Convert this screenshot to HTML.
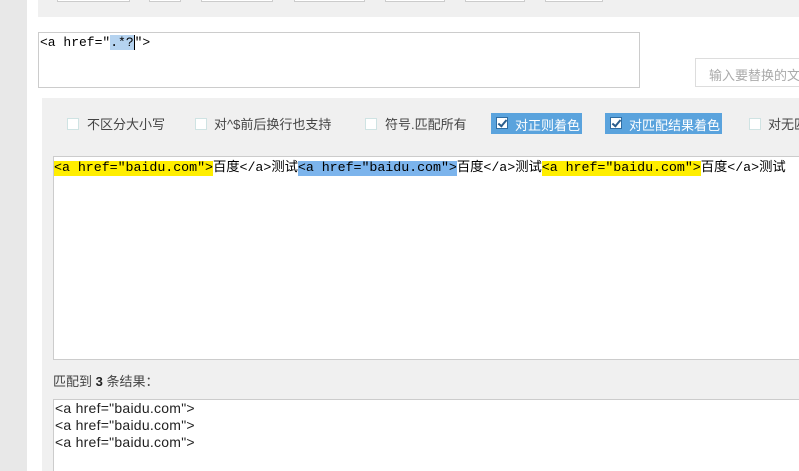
<!DOCTYPE html>
<html><head><meta charset="utf-8"><style>
*{margin:0;padding:0;box-sizing:border-box}
html,body{width:799px;height:471px;overflow:hidden}
body{background:#fff;position:relative;font-family:"Liberation Sans","Noto Sans CJK SC",sans-serif;font-size:13px;color:#333}
.abs{position:absolute}
.btn{position:absolute;top:-2px;height:4px;border:1px solid #ccc;background:#fff}
.mono{font-family:"Liberation Mono","Noto Sans CJK SC",monospace;font-size:13.33px;color:#000}
.cb{position:absolute;top:118px;width:12px;height:12px;border:1px solid #cfe3e3;background:#fff}
.lbl{position:absolute;top:114px;font-size:13px;color:#444;white-space:nowrap}
.chk{position:absolute;top:113px;height:21px;background:#5aa3dd;color:#fff;font-size:13px;padding:2px 0 0 24px;white-space:nowrap}
.chk i{position:absolute;left:5px;top:4px;width:12px;height:12px;background:#fff;border:1px solid #2f6da3}
.chk i:after{content:"";position:absolute;left:3px;top:0px;width:3px;height:7px;border:solid #2a5d8c;border-width:0 2px 2px 0;transform:rotate(40deg)}
.y{background:#ffee00}.b{background:#7cb4ec}
</style></head><body>
<div class="abs" style="left:0;top:0;width:27px;height:471px;background:#e8e8e8"></div>
<div class="abs" style="left:38px;top:0;width:761px;height:17px;background:#f0f0f0"></div>
<div class="btn" style="left:57px;width:73px"></div>
<div class="btn" style="left:149px;width:32px"></div>
<div class="btn" style="left:201px;width:72px"></div>
<div class="btn" style="left:294px;width:71px"></div>
<div class="btn" style="left:385px;width:60px"></div>
<div class="btn" style="left:465px;width:60px"></div>
<div class="btn" style="left:545px;width:58px"></div>
<div class="abs mono" style="left:38px;top:32px;width:602px;height:56px;border:1px solid #ccc;padding:2px 0 0 1px;font-size:13px;line-height:15px">&lt;a href="<span style="background:#b5d3f0">.*?</span><span style="border-left:1px solid #000"></span>"&gt;</div>
<div class="abs" style="left:695px;top:58px;width:110px;height:29px;border:1px solid #ddd;color:#aaa;padding:6px 0 0 13px;font-size:13px;white-space:nowrap">输入要替换的文</div>
<div class="abs" style="left:42px;top:98px;width:757px;height:373px;background:#f0f0f0"></div>
<div class="cb" style="left:67px"></div><div class="lbl" style="left:87px">不区分大小写</div>
<div class="cb" style="left:195px"></div><div class="lbl" style="left:214px">对^$前后换行也支持</div>
<div class="cb" style="left:365px"></div><div class="lbl" style="left:385px">符号.匹配所有</div>
<div class="chk" style="left:491px;width:91px"><i></i>对正则着色</div>
<div class="chk" style="left:605px;width:117px"><i></i>对匹配结果着色</div>
<div class="cb" style="left:749px"></div><div class="lbl" style="left:768px">对无匹</div>
<div class="abs mono" style="left:53px;top:156px;width:760px;height:204px;background:#fff;border:1px solid #ccc;padding:3px 0 0 0;line-height:17px;white-space:nowrap;letter-spacing:-0.05px"><span class="y">&lt;a href="baidu.com"&gt;</span>百度&lt;/a&gt;测试<span class="b">&lt;a href="baidu.com"&gt;</span>百度&lt;/a&gt;测试<span class="y">&lt;a href="baidu.com"&gt;</span>百度&lt;/a&gt;测试</div>
<div class="abs" style="left:53px;top:371px;font-size:13px;color:#444">匹配到 <b style="color:#222">3</b> 条结果：</div>
<div class="abs" style="left:53px;top:399px;width:760px;height:80px;background:#fff;border:1px solid #ccc;padding:0 0 0 1px;font-size:14px;letter-spacing:0.25px;line-height:17px;color:#222">&lt;a href="baidu.com"&gt;<br>&lt;a href="baidu.com"&gt;<br>&lt;a href="baidu.com"&gt;</div>
</body></html>
